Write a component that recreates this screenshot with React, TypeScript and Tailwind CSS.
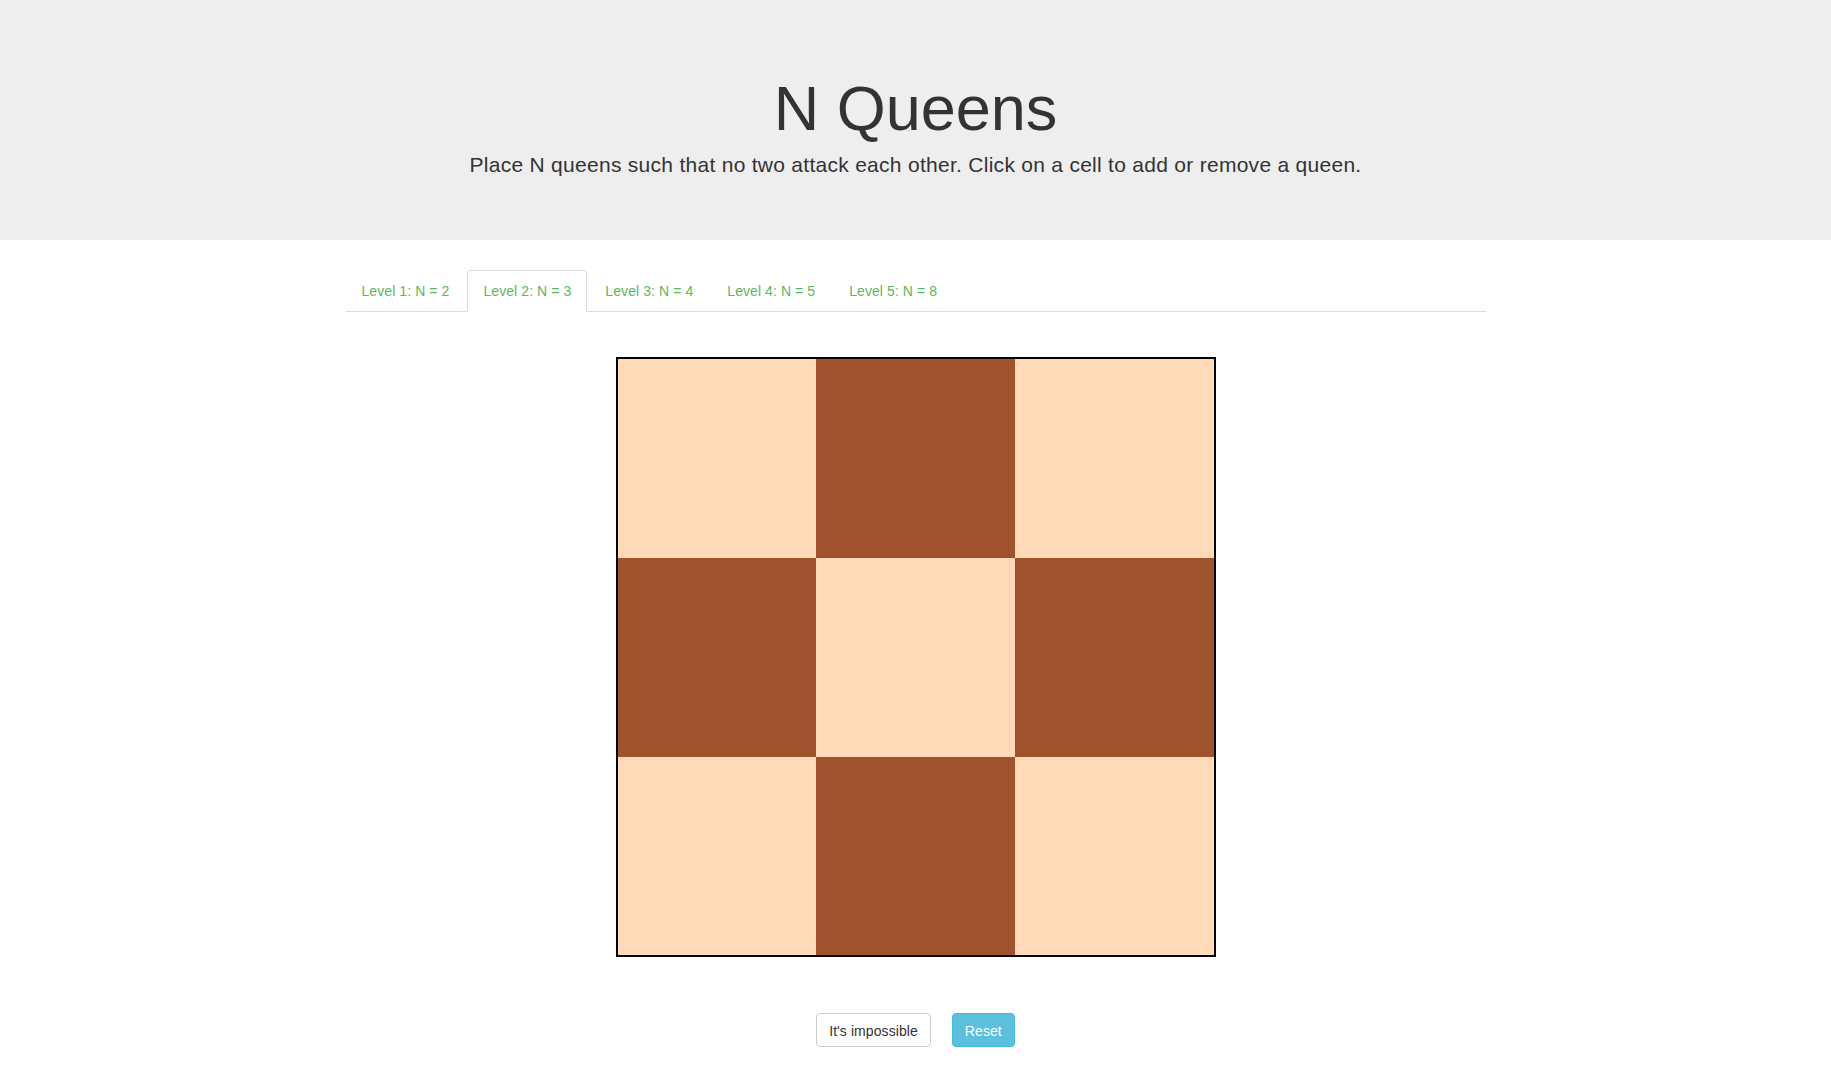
import { useState } from "react";

const LEVELS = [2, 3, 4, 5, 8];

export default function App() {
  const [level, setLevel] = useState(1);
  const [queens, setQueens] = useState<string[]>([]);
  const n = LEVELS[level];

  function toggleCell(key: string) {
    setQueens((current) =>
      current.includes(key) ? current.filter((item) => item !== key) : [...current, key]
    );
  }

  return (
    <div className="min-h-screen bg-white font-['Liberation_Sans',Arial,sans-serif] text-[14px] leading-[20px] tracking-[0.08px] text-[#333]">
      <div className="mb-[30px] bg-[#eeeeee] py-12 text-center">
        <div className="mx-auto w-[1170px] px-[15px]">
          <h1 className="mb-[7px] mt-[26px] text-[63px] font-normal leading-[1.1] tracking-normal">
            N Queens
          </h1>
          <p className="mb-[12px] text-[21px] leading-[30px] tracking-[0.28px]">
            Place N queens such that no two attack each other. Click on a cell to add or remove a
            queen.
          </p>
        </div>
      </div>

      <div className="mx-auto w-[1170px] px-[15px]">
        <ul className="flex border-b border-[#dddddd]">
          {LEVELS.map((value, index) => (
            <li className="-mb-px mr-[2px]" key={value}>
              <button
                className={
                  index === level
                    ? "block rounded-t-[4px] border border-[#dddddd] border-b-transparent bg-white px-[15px] pb-[10px] pt-[11px] leading-[19px] text-[#5cb85c]"
                    : "block rounded-t-[4px] border border-transparent px-[15px] pb-[10px] pt-[11px] leading-[19px] text-[#5cb85c] hover:border-[#eeeeee] hover:bg-[#eeeeee]"
                }
                onClick={() => {
                  setLevel(index);
                  setQueens([]);
                }}
                type="button"
              >
                Level {index + 1}: N = {value}
              </button>
            </li>
          ))}
        </ul>

        <div
          className="mx-auto mt-[45px] grid h-[600px] w-[600px] border-2 border-black"
          style={{ gridTemplateColumns: `repeat(${n}, 1fr)`, gridTemplateRows: `repeat(${n}, 1fr)` }}
        >
          {Array.from({ length: n * n }, (_, i) => {
            const row = Math.floor(i / n);
            const col = i % n;
            const key = `${row}-${col}`;
            const dark = (row + col) % 2 === 1;
            return (
              <div
                className={
                  dark
                    ? "flex cursor-pointer items-center justify-center bg-[#a0522d] text-[90px] text-black"
                    : "flex cursor-pointer items-center justify-center bg-[#ffdab9] text-[90px] text-black"
                }
                key={key}
                onClick={() => toggleCell(key)}
              >
                {queens.includes(key) ? "♛" : ""}
              </div>
            );
          })}
        </div>

        <div className="mt-[56px] flex justify-center gap-[21px]">
          <button
            className="rounded-[4px] border border-[#cccccc] bg-white px-3 pb-[5px] pt-[7px] text-[14px] leading-[20px] text-[#333]"
            type="button"
          >
            It's impossible
          </button>
          <button
            className="rounded-[4px] border border-[#46b8da] bg-[#5bc0de] px-3 pb-[5px] pt-[7px] text-[14px] leading-[20px] text-white"
            onClick={() => setQueens([])}
            type="button"
          >
            Reset
          </button>
        </div>
      </div>
    </div>
  );
}
